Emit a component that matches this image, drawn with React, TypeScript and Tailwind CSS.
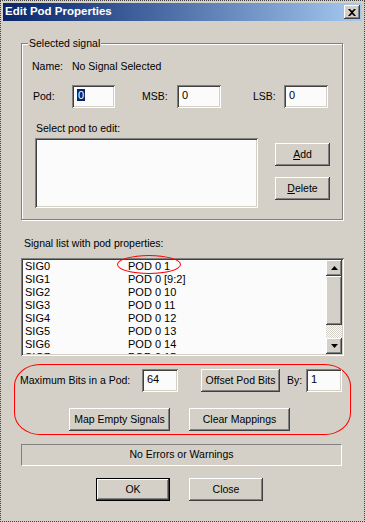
const raised =
  "flex items-center justify-center bg-[#d4d0c8] shadow-[inset_-1px_-1px_0_#404040,inset_1px_1px_0_#ffffff,inset_-2px_-2px_0_#808080,inset_2px_2px_0_#d4d0c8]";
const sunken =
  "bg-[#fbfbfb] shadow-[inset_1px_1px_0_#808080,inset_-1px_-1px_0_#ffffff,inset_2px_2px_0_#404040,inset_-2px_-2px_0_#d4d0c8]";

const signals = [
  ["SIG0", "POD 0 1"],
  ["SIG1", "POD 0 [9:2]"],
  ["SIG2", "POD 0 10"],
  ["SIG3", "POD 0 11"],
  ["SIG4", "POD 0 12"],
  ["SIG5", "POD 0 13"],
  ["SIG6", "POD 0 14"],
  ["SIG7", "POD 0 15"],
];

function Field({ w, value, selected }: { w: string; value: string; selected?: boolean }) {
  return (
    <div className={`${sunken} ${w} h-[23px] pl-[5px] pt-[4px] leading-[13px] text-[11px]`}>
      {selected ? <span className="bg-[#0a246a] text-white px-[1px]">{value}</span> : value}
    </div>
  );
}

function Arrow({ up }: { up?: boolean }) {
  return (
    <svg width="7" height="4" viewBox="0 0 7 4">
      <path d={up ? "M3.5 0 L7 4 L0 4 Z" : "M0 0 L7 0 L3.5 4 Z"} fill="#000" />
    </svg>
  );
}

export default function App() {
  return (
    <div className="w-[365px] h-[522px] overflow-hidden bg-[#d4d0c8] border border-dotted border-[#404040] p-[2px] font-['Liberation_Sans',Arial,sans-serif] text-[10.5px] text-black">
      {/* title bar */}
      <div className="h-[18px] flex items-center justify-between pl-[2px] pr-[2px] bg-gradient-to-r from-[#0a246a] to-[#a6caf0]">
        <span className="text-white font-bold text-[11.5px]">Edit Pod Properties</span>
        <div className={`${raised} w-[16px] h-[14px]`}>
          <svg width="8" height="7" viewBox="0 0 8 7">
            <path d="M0 0 L2 0 L4 2 L6 0 L8 0 L5 3.5 L8 7 L6 7 L4 5 L2 7 L0 7 L3 3.5 Z" fill="#000" />
          </svg>
        </div>
      </div>

      {/* selected signal group */}
      <div className="relative mt-[22px] ml-[18px] w-[322px] border border-[#808080] shadow-[inset_1px_1px_0_#fff,1px_1px_0_#fff] pt-[16px] pb-[11px]">
        <span className="absolute left-[6px] top-[-7px] px-[1px] bg-[#d4d0c8] leading-[13px]">Selected signal</span>
        <div className="flex h-[13px] leading-[13px] pl-[10px]">
          <span className="w-[40px]">Name:</span>
          <span>No Signal Selected</span>
        </div>
        <div className="flex items-center mt-[12px] pl-[11px]">
          <span className="w-[39px]">Pod:</span>
          <Field w="w-[43px]" value="0" selected />
          <span className="ml-[27px] w-[35px]">MSB:</span>
          <Field w="w-[44px]" value="0" />
          <span className="ml-[32px] w-[31px]">LSB:</span>
          <Field w="w-[44px]" value="0" />
        </div>
        <div className="mt-[14px] pl-[14px] h-[13px] leading-[13px]">Select pod to edit:</div>
        <div className="flex mt-[3px] pl-[13px]">
          <div className={`${sunken} w-[223px] h-[70px]`} />
          <div className="flex flex-col ml-[17px] mt-[5px] gap-[11px]">
            <div className={`${raised} w-[55px] h-[23px]`}>
              <span><u>A</u>dd</span>
            </div>
            <div className={`${raised} w-[55px] h-[23px]`}>
              <span><u>D</u>elete</span>
            </div>
          </div>
        </div>
      </div>

      <div className="mt-[17px] ml-[21px] h-[13px] leading-[13px]">Signal list with pod properties:</div>

      {/* signal list */}
      <div className={`${sunken} relative mt-[8px] ml-[18px] w-[323px] h-[98px] flex p-[2px] bg-[#fbfbfb]`}>
        <div className="flex-1 overflow-hidden pl-[2px] text-[11px]">
          {signals.map(([s, p]) => (
            <div key={s} className="flex h-[13px] leading-[13px]">
              <span className="w-[103px]">{s}</span>
              <span>{p}</span>
            </div>
          ))}
        </div>
        <div className="w-[16px] flex flex-col">
          <div className={`${raised} h-[16px]`}>
            <Arrow up />
          </div>
          <div className={`${raised} h-[49px]`} />
          <div className="flex-1 bg-[repeating-conic-gradient(#d4d0c8_0%_25%,#ffffff_0%_50%)] bg-[length:2px_2px]" />
          <div className={`${raised} h-[16px]`}>
            <Arrow />
          </div>
        </div>
        <div className="absolute left-[96px] top-[-3px] w-[64px] h-[19px] border border-[#ff0000] rounded-[50%]" />
      </div>

      {/* annotated block */}
      <div className="mt-[8px] ml-[11px] w-[337px] h-[71px] border border-[#ff0000] rounded-[26px_/_22px] pt-[4px]">
        <div className="flex items-center pl-[5px]">
          <span className="w-[122px]">Maximum Bits in a Pod:</span>
          <Field w="w-[36px]" value="64" />
          <div className={`${raised} ml-[23px] w-[79px] h-[23px]`}>Offset Pod Bits</div>
          <span className="ml-[7px] w-[19px]">By:</span>
          <Field w="w-[36px]" value="1" />
        </div>
        <div className="flex mt-[16px] pl-[54px] gap-[19px]">
          <div className={`${raised} w-[101px] h-[23px]`}>Map Empty Signals</div>
          <div className={`${raised} w-[101px] h-[23px]`}>Clear Mappings</div>
        </div>
      </div>

      {/* status */}
      <div className="mt-[9px] ml-[18px] w-[321px] h-[22px] flex items-center justify-center border border-t-[#808080] border-l-[#808080] border-b-white border-r-white">
        No Errors or Warnings
      </div>

      <div className="flex mt-[12px] ml-[93px] gap-[19px]">
        <div className="border border-black">
          <div className={`${raised} w-[72px] h-[21px]`}>OK</div>
        </div>
        <div className={`${raised} w-[74px] h-[23px]`}>Close</div>
      </div>
    </div>
  );
}
